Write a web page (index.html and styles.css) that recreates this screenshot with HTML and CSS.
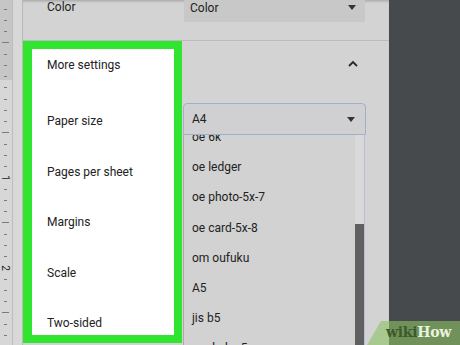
FILE: index.html
```html
<!DOCTYPE html>
<html>
    <head>
        <meta charset="UTF-8">
        <title>Print - More settings</title>
        <link rel="stylesheet" href="styles.css">
    </head>
    <body>
        <div class="screen">
            <!-- 왼쪽 눈금자 -->
            <div class="ruler">
                <div class="tick"></div>
                <div class="tick"></div>
                <div class="tick"></div>
                <div class="tick long"></div>
                <div class="tick"></div>
                <div class="tick"></div>
                <div class="tick"></div>
                <div class="tick"></div>
                <div class="tick"></div>
                <div class="tick"></div>
                <div class="tick"></div>
                <div class="tick long"></div>
                <div class="tick"></div>
                <div class="tick"></div>
                <div class="tick"></div>
                <div class="tick num"><span>1</span></div>
                <div class="tick"></div>
                <div class="tick"></div>
                <div class="tick"></div>
                <div class="tick long"></div>
                <div class="tick"></div>
                <div class="tick"></div>
                <div class="tick"></div>
                <div class="tick num"><span>2</span></div>
                <div class="tick"></div>
                <div class="tick"></div>
                <div class="tick"></div>
                <div class="tick long"></div>
                <div class="tick"></div>
                <div class="tick"></div>
                <div class="tick"></div>
            </div>
            <div class="gutter"></div>

            <!-- 인쇄 설정 패널 -->
            <div class="panel">
                <div class="top-row">
                    <span class="label">Color</span>
                    <div class="select select-top">
                        <span>Color</span>
                        <span class="caret"></span>
                    </div>
                </div>
                <div class="body">
                    <div class="highlight">
                        <ul class="labels">
                            <li class="first">More settings</li>
                            <li>Paper size</li>
                            <li>Pages per sheet</li>
                            <li>Margins</li>
                            <li>Scale</li>
                            <li>Two-sided</li>
                        </ul>
                    </div>
                    <div class="options">
                        <div class="section-head">
                            <svg class="chevron" width="10" height="7" viewBox="0 0 10 7">
                                <polyline points="1,6 5,2 9,6" fill="none" stroke="#2a2a2a" stroke-width="1.8"/>
                            </svg>
                        </div>
                        <div class="select select-open">
                            <span>A4</span>
                            <span class="caret"></span>
                        </div>
                        <div class="dropdown">
                            <ul class="items">
                                <li>oe 6k</li>
                                <li>oe ledger</li>
                                <li>oe photo-5x-7</li>
                                <li>oe card-5x-8</li>
                                <li>om oufuku</li>
                                <li>A5</li>
                                <li>jis b5</li>
                                <li>om kaku 5</li>
                            </ul>
                            <div class="scrollbar"><div class="thumb"></div></div>
                        </div>
                    </div>
                </div>
            </div>
            <div class="side"></div>

            <!-- 워터마크는 화면 위에 겹쳐있음 -->
            <div class="watermark"><span class="wiki">wiki</span><span class="how">How</span></div>
        </div>
    </body>
</html>
```

FILE: styles.css
```css
*{
    box-sizing: border-box;
}
body{
    margin: 0;
    font-family: Roboto, "Liberation Sans", sans-serif;
    color: #222;
}
ul{
    list-style: none;
    margin: 0;
    padding: 0;
}
/* 전체 화면 */
.screen{
    position: relative;
    display: flex;
    width: 460px;
    height: 345px;
    overflow: hidden;
    background: #d3d3d3;
}

/* 눈금자 */
.ruler{
    width: 13px;
    padding-top: 3.6px;
    background: linear-gradient(#c6c6c6 0 80px, #d7d7d7 80px);
    border-right: 1px solid #bdbdbd;
}
.tick{
    height: 11.25px;
    display: flex;
    align-items: center;
    padding-left: 4px;
}
.tick::before{
    content: '';
    width: 3px;
    height: 1px;
    background: #7a7a7a;
}
.tick.long{
    padding-left: 2px;
}
.tick.long::before{
    width: 7px;
}
.tick.num{
    padding-left: 2px;
}
.tick.num::before{
    display: none;
}
.tick.num span{
    display: inline-block;
    font-size: 10px;
    line-height: 10px;
    transform: rotate(90deg);
    color: #222;
}
.gutter{
    width: 10px;
    background: #d8d8d8;
    border-right: 1px solid #bbb;
}

/* 설정 패널 */
.panel{
    width: 366px;
    display: flex;
    flex-direction: column;
    box-shadow: inset 0 3px 3px -2px rgba(0,0,0,.25);
}
.top-row{
    height: 41px;
    flex-shrink: 0;
    display: flex;
    align-items: flex-start;
    border-bottom: 1px solid #bcbcbc;
    font-size: 12px;
}
.label{
    margin-left: 24px;
    line-height: 15px;
}
.select{
    display: flex;
    align-items: center;
    justify-content: space-between;
    font-size: 12px;
}
.select-top{
    margin-left: auto;
    margin-right: 24px;
    width: 181px;
    height: 22px;
    padding: 0 9px 7px 6px;
    background: #c8c8c8;
}
.caret{
    width: 0;
    height: 0;
    border-left: 4px solid transparent;
    border-right: 4px solid transparent;
    border-top: 5px solid #333;
}

.body{
    flex: 1;
    display: flex;
}
/* 초록색 강조박스 */
.highlight{
    width: 159px;
    height: 302px;
    border: 8px solid #30e430;
    border-left-width: 9px;
    background: #fff;
}
.labels{
    display: flex;
    flex-direction: column;
    gap: 18.6px;
    padding-left: 15px;
    font-size: 12px;
}
.labels li{
    height: 32px;
    line-height: 32px;
}
.labels .first{
    margin-bottom: 5.4px;
}

/* 오른쪽 옵션 */
.options{
    flex: 1;
    display: flex;
    flex-direction: column;
}
.section-head{
    height: 62px;
    flex-shrink: 0;
    padding: 19px 0 0 166px;
}
.chevron{
    display: block;
}
.select-open{
    margin-left: 1px;
    width: 183px;
    height: 32px;
    flex-shrink: 0;
    padding: 0 10px 0 8px;
    background: #d0d0d2;
    border: 1px solid #9fb1c8;
    border-radius: 4px 4px 0 0;
}
.dropdown{
    margin-left: 1px;
    width: 182px;
    flex: 1;
    display: flex;
    overflow: hidden;
    background: #d2d2d2;
    border-left: 1px solid #a9a9ae;
    border-right: 1px solid #b8bde0;
}
.items{
    flex: 1;
    margin-top: -13px;
    padding-left: 8px;
    font-size: 12px;
}
.items li{
    height: 30.2px;
    line-height: 30.2px;
}
.scrollbar{
    width: 9px;
    background: #d9d9d9;
}
.thumb{
    margin-top: 89px;
    height: 200px;
    background: #606060;
}
.side{
    flex: 1;
    background: #464a4c;
}

/* 워터마크 */
.watermark{
    position: absolute;
    right: 0;
    bottom: 0;
    width: 93px;
    height: 24px;
    padding: 3px 0 0 19px;
    background: rgba(140,195,100,.6);
    clip-path: polygon(14px 0, 100% 0, 100% 100%, 0 100%);
    font-family: "DejaVu Serif", "Liberation Serif", serif;
    font-weight: bold;
    font-size: 14px;
    letter-spacing: -0.3px;
}
.wiki{
    color: #3d5a2c;
}
.how{
    color: #e9f3df;
}
```
